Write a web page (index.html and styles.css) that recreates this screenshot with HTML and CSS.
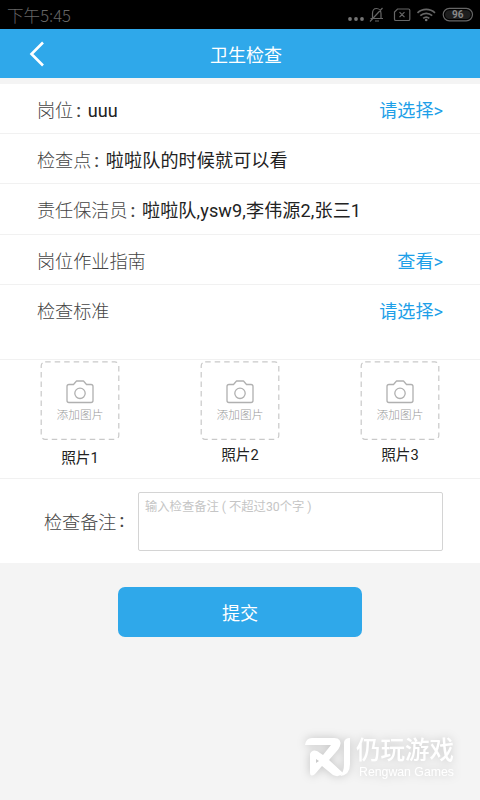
FILE: index.html
```html
<!DOCTYPE html>
<html lang="zh-CN">
<head>
<meta charset="utf-8">
<title>卫生检查</title>
<link rel="stylesheet" href="styles.css">
</head>
<body>
<svg class="defs" width="0" height="0">
  <symbol id="add-photo" viewBox="0 0 80 80">
    <rect x="1.200" y="0.800" width="77.600" height="77.600" rx="4" fill="none" stroke="#c9c9c9" stroke-width="1.2" stroke-dasharray="5.5 4"/>
    <g fill="none" stroke="#b0b0b0" stroke-width="1.3" stroke-linejoin="round">
      <path d="M29 23.500h4.500l3-3.500h7l3 3.500h4.500a2 2 0 0 1 2 2v14a2 2 0 0 1-2 2h-22a2 2 0 0 1-2-2v-14a2 2 0 0 1 2-2z"/>
      <circle cx="40" cy="32.300" r="5.200"/>
    </g>
  </symbol>
</svg>
<div class="status">
  <span class="time">下午5:45</span>
  <svg class="status-icons" width="130" height="29" viewBox="346 0 130 29" fill="none" stroke="#666" stroke-width="1.200">
    <g fill="#747474" stroke="none"><circle cx="350" cy="19" r="1.900"/><circle cx="356" cy="19" r="1.900"/><circle cx="362" cy="19" r="1.900"/></g>
    <path d="M370.500 18.500h12.500M372.500 18.500v-5c0-3 1.500-5 4-5s4.500 2 4.500 5v5M375 21h4M382.500 8l-12.500 13.500"/>
    <path d="M397.500 9h11a1.300 1.300 0 0 1 1.300 1.300v8.900a1.300 1.300 0 0 1-1.300 1.300h-12.700a1.300 1.300 0 0 1-1.300-1.300v-7.200zM399.500 12.200l5 5M404.500 12.200l-5 5"/>
    <path stroke-width="1.700" d="M417.500 12.800c5-4.600 12.500-4.600 17.500 0M420.300 15.700c3.500-3.200 8.400-3.200 11.900 0M423.200 18.400c1.900-1.600 4.200-1.600 6.100 0"/>
    <circle cx="426.200" cy="20" r="1.300" fill="#747474" stroke="none"/>
    <rect x="443.200" y="8.400" width="29.300" height="12.400" rx="6.200" stroke="#666"/>
    <rect x="445" y="10.200" width="25.700" height="8.800" rx="4.400" fill="#1e1e1e" stroke="none"/>
    <text class="battery" x="457.800" y="18.300" text-anchor="middle" fill="#888" stroke="none">96</text>
  </svg>
</div>
<header class="header">
  <svg class="back" width="18" height="28" viewBox="0 0 18 28" fill="none" stroke="#fff" stroke-width="2.600"><path d="M15 2.500L3.500 14 15 25.500"/></svg>
  <h1>卫生检查</h1>
</header>
<main class="panel">
  <div class="row"><span class="label">岗位</span><span class="colon">:</span><span class="value">uuu</span><a class="action">请选择&gt;</a></div>
  <div class="row"><span class="label">检查点</span><span class="colon">:</span><span class="value">啦啦队的时候就可以看</span></div>
  <div class="row"><span class="label">责任保洁员</span><span class="colon">:</span><span class="value">啦啦队,ysw9,李伟源2,张三1</span></div>
  <div class="row"><span class="label">岗位作业指南</span><a class="action">查看&gt;</a></div>
  <div class="row tall"><span class="label">检查标准</span><a class="action">请选择&gt;</a></div>
  <div class="photos">
    <div class="photo first"><svg width="80" height="80"><use href="#add-photo"/></svg><span class="hint">添加图片</span><span class="name">照片1</span></div>
    <div class="photo"><svg width="80" height="80"><use href="#add-photo"/></svg><span class="hint">添加图片</span><span class="name">照片2</span></div>
    <div class="photo"><svg width="80" height="80"><use href="#add-photo"/></svg><span class="hint">添加图片</span><span class="name">照片3</span></div>
  </div>
  <div class="remark"><span class="label">检查备注</span><span class="colon">:</span><div class="input">输入检查备注<span class="paren">(</span>不超过30个字<span class="paren">)</span></div></div>
</main>
<div class="submit">提交</div>
<div class="watermark">
  <svg width="46" height="40" viewBox="0 0 46 40">
    <path fill="#fff" fill-rule="evenodd" d="M0 7Q1 0 7 0H29Q37 0 35 8Q34 11 31 14L24 22L38 35Q34 40 28 37L17 28L10 36Q5 40 5 34V16Q7 11 12 13L18 17L26 7ZM11 21V25L14 23Z"/>
    <path fill="#fff" d="M39 4Q40 0 45 0V26Q45 37 35 38Q39 34 39 27Z"/>
  </svg>
  <div class="brand"><span class="brand-cn">仍玩游戏</span><span class="brand-en">Rengwan Games</span></div>
</div>
</body>
</html>
```

FILE: styles.css
```css
* { box-sizing: border-box; }
body {
  margin: 0;
  height: 800px;
  background: #f4f4f4;
  font-family: Roboto, "Noto Sans CJK SC", sans-serif;
  font-size: 18.1px;
  font-weight: 400;
  color: #222;
  overflow: hidden;
}
.defs { display: block; }
.status {
  height: 29px;
  background: #000;
  display: flex;
  justify-content: space-between;
  align-items: center;
  padding: 0 4px 0 7px;
}
.time { color: #686868; font: 300 16.600px/29px "Noto Sans CJK SC", sans-serif; padding-top: 2px; }
.battery { font: bold 10px Roboto, sans-serif; }
.header {
  height: 49px;
  background: #2fa8ea;
  display: grid;
  grid-template-columns: 80px 1fr 80px;
  align-items: center;
}
.back { margin: 0 0 1px 28px; }
.header h1 {
  margin: 0 0 0 12px;
  text-align: center;
  color: #fff;
  font-size: 18px;
  font-weight: 400;
  line-height: 49px;
  padding-top: 2px;
}
.panel { margin-top: 6px; background: #fff; }
.row {
  height: 50.2px;
  border-bottom: 1px solid #f1f1f1;
  display: flex;
  align-items: flex-start;
  padding: 0 37px;
  line-height: 53px;
  white-space: nowrap;
}
.label { color: #444; font-weight: 300; }
.value { letter-spacing: .1px; }
.colon { width: 14.500px; padding-left: 3px; color: #444; flex: none; font-weight: 500; }
.action { margin-left: auto; color: #1e9fe8; }
.tall { height: 75px; }
.photos {
  height: 119px;
  border-bottom: 1px solid #f1f1f1;
  display: flex;
  justify-content: space-between;
  padding: 1px 40px 0;
}
.photo {
  width: 80px;
  display: flex;
  flex-direction: column;
  align-items: center;
}
.photo svg { flex: none; display: block; }
.hint {
  margin-top: -35px;
  height: 35px;
  line-height: 18px;
  font-size: 11.700px;
  font-weight: 300;
  color: #999;
}
.name { font-size: 14.700px; line-height: 22px; margin-top: 3px; }
.first .name { margin-top: 6px; }
.remark {
  height: 84px;
  display: flex;
  align-items: center;
  padding: 0 37px 0 44px;
}
.remark .colon { width: 21.600px; padding-left: 3px; }
.input {
  flex: 1;
  height: 59px;
  margin-top: 1px;
  border: 1px solid #d4d4d4;
  border-radius: 2px;
  padding: 5px 6px;
  font-size: 12.300px;
  line-height: 19px;
  color: #c5c5c5;
}
.paren { padding: 0 3px; }
.submit {
  width: 244px;
  height: 50px;
  margin: 24px auto 0;
  border-radius: 7px;
  background: #2fa8ea;
  color: #fff;
  text-align: center;
  line-height: 53px;
}
.watermark {
  display: flex;
  width: max-content;
  margin: 100px 0 0 305px;
  color: #fff;
  filter: drop-shadow(0 0 5px rgba(0, 0, 0, .2));
}
.watermark svg { margin-top: 1px; }
.brand { display: flex; flex-direction: column; margin-left: 5px; }
.brand-cn { font: 500 24.500px/24px "Noto Sans CJK SC", sans-serif; }
.brand-en { font: 12.300px/14px "Liberation Sans", sans-serif; padding: 4px 0 0 3px; }
```
